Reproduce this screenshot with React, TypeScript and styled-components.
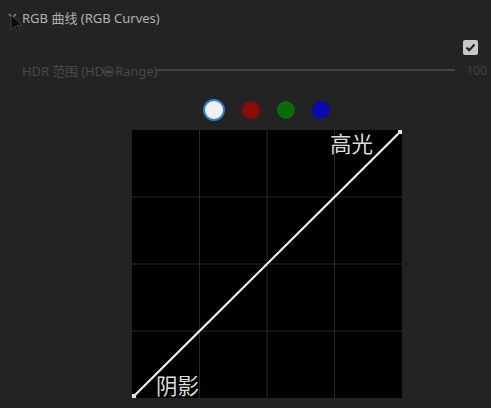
import React from 'react';
import styled, { createGlobalStyle } from 'styled-components';

const GlobalStyle = createGlobalStyle`
  html, body {
    margin: 0;
    padding: 0;
    background: #232323;
    overflow: hidden;
  }
  body {
    font-family: "Noto Sans", "Noto Sans CJK SC", sans-serif;
  }
`;

const Panel = styled.div`
  position: relative;
  width: 491px;
  height: 408px;
  background: #232323;
  overflow: hidden;
`;

const Header = styled.div`
  display: flex;
  align-items: center;
  height: 34px;
  padding-left: 8px;
  color: #b2b2b2;
  font-size: 13px;
`;

const Chevron = styled.svg`
  width: 9px;
  height: 6px;
  margin-right: 5px;
  margin-top: -2px;
`;

const CheckRow = styled.div`
  display: flex;
  justify-content: flex-end;
  margin-top: 6px;
  padding-right: 13px;
`;

const CheckBox = styled.div`
  width: 15px;
  height: 15px;
  border-radius: 2px;
  background: #c8c8c8;
  display: flex;
  align-items: center;
  justify-content: center;
`;

const SliderRow = styled.div`
  position: relative;
  display: flex;
  align-items: center;
  height: 16px;
  margin-top: 7px;
  padding-left: 22px;
  padding-right: 4px;
  color: #4a4a4a;
  font-size: 13px;
`;

const SliderLabel = styled.span`
  white-space: nowrap;
  letter-spacing: -0.1px;
`;

const Track = styled.div`
  flex: 1;
  height: 2px;
  margin-right: 11px;
  margin-top: -1px;
  background: #444;
`;

const Thumb = styled.div`
  position: absolute;
  left: 103px;
  top: 4px;
  width: 9px;
  height: 9px;
  border-radius: 50%;
  border: 1px solid #4a4a4a;
  background: #2d2d2d;
  &::after {
    content: '';
    position: absolute;
    left: 1px;
    right: 1px;
    top: 3.5px;
    height: 2px;
    background: #4a4a4a;
  }
`;

const Value = styled.span`
  font-size: 12px;
  color: #444;
  margin-top: 1px;
`;

const CurveSection = styled.div`
  padding-left: 132px;
  margin-top: 21px;
`;

const CurveColumn = styled.div`
  width: 270px;
  display: flex;
  flex-direction: column;
  align-items: center;
`;

const Swatches = styled.div`
  display: flex;
  align-items: center;
  gap: 17px;
  height: 22px;
  margin-left: -2px;
`;

const Swatch = styled.div<{ $color: string; $active?: boolean }>`
  box-sizing: border-box;
  width: ${p => (p.$active ? 22 : 18)}px;
  height: ${p => (p.$active ? 22 : 18)}px;
  border-radius: 50%;
  background: ${p => p.$color};
  border: ${p => (p.$active ? '2.5px solid #2f7fd6' : 'none')};
`;

const Chart = styled.div`
  position: relative;
  width: 270px;
  height: 268px;
  margin-top: 9px;
  background: #000;
`;

const ChartSvg = styled.svg`
  display: block;
`;

const ChartLabel = styled.span<{ $corner: 'top' | 'bottom' }>`
  position: absolute;
  font-size: 21.5px;
  line-height: 26px;
  color: #dcdcdc;
  ${p => (p.$corner === 'top' ? 'right: 29px; top: 1px;' : 'left: 24px; bottom: -1px;')}
`;

const Cursor = styled.svg`
  position: absolute;
  left: 10px;
  top: 14px;
`;

const swatches = [
  { color: '#f0f0f0', active: true },
  { color: '#8a0b08' },
  { color: '#0b6a0c' },
  { color: '#0a0bad' },
];

const W = 270;
const H = 268;

const App = () => (
  <Panel>
    <GlobalStyle />
    <Header>
      <Chevron viewBox="0 0 9 6">
        <polyline points="1,1 4.5,4.5 8,1" fill="none" stroke="#8a8a8a" strokeWidth="1.4" />
      </Chevron>
      RGB 曲线 (RGB Curves)
    </Header>
    <CheckRow>
      <CheckBox>
        <svg width="11" height="9" viewBox="0 0 11 9">
          <polyline points="1.5,4.5 4.2,7.2 9.5,1.5" fill="none" stroke="#1e1e1e" strokeWidth="2" />
        </svg>
      </CheckBox>
    </CheckRow>
    <SliderRow>
      <SliderLabel>HDR 范围 (HDR Range)</SliderLabel>
      <Track />
      <Value>100</Value>
      <Thumb />
    </SliderRow>
    <CurveSection>
      <CurveColumn>
        <Swatches>
          {swatches.map(s => (
            <Swatch key={s.color} $color={s.color} $active={s.active} />
          ))}
        </Swatches>
        <Chart>
          <ChartSvg width={W} height={H} viewBox={`0 0 ${W} ${H}`}>
            {[1, 2, 3].map(i => (
              <line key={`v${i}`} x1={(W / 4) * i} y1={0} x2={(W / 4) * i} y2={H} stroke="#2a2a2a" strokeWidth="1" />
            ))}
            {[1, 2, 3].map(i => (
              <line key={`h${i}`} x1={0} y1={(H / 4) * i} x2={W} y2={(H / 4) * i} stroke="#2a2a2a" strokeWidth="1" />
            ))}
            <line x1={2} y1={266} x2={268} y2={2} stroke="#f2f2f2" strokeWidth="2.2" />
            <rect x={0} y={264} width={4} height={4} fill="#e6e6e6" />
            <rect x={266} y={0} width={4} height={4} fill="#e6e6e6" />
          </ChartSvg>
          <ChartLabel $corner="top">高光</ChartLabel>
          <ChartLabel $corner="bottom">阴影</ChartLabel>
        </Chart>
      </CurveColumn>
    </CurveSection>
    <Cursor width="13" height="20" viewBox="0 0 13 20">
      <path d="M1 1 L1 16 L4.8 12.2 L7.4 18.4 L9.6 17.4 L7 11.4 L12 11.4 Z" fill="#0c0c0c" stroke="#4a4a4a" strokeWidth="0.8" />
    </Cursor>
  </Panel>
);

export default App;
